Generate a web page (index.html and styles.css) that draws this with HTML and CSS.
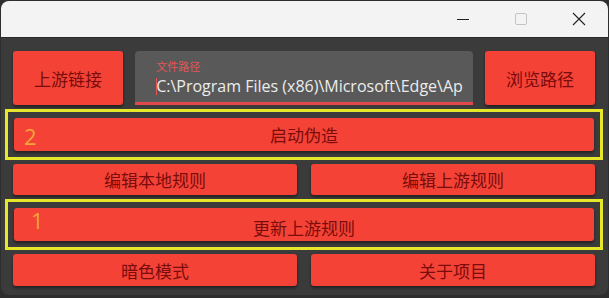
FILE: index.html
```html
<!DOCTYPE html>
<html lang="zh-CN">
<head>
    <meta charset="UTF-8">
    <title>伪造工具</title>
    <link rel="stylesheet" href="styles.css">
</head>
<body>
<div class="window">
    <div class="titlebar">
        <div class="control">
            <svg width="14" height="14" viewBox="0 0 14 14"><line x1="1" y1="7.5" x2="13" y2="7.5" stroke="#222" stroke-width="1"/></svg>
        </div>
        <div class="control">
            <svg width="14" height="14" viewBox="0 0 14 14"><rect x="1.5" y="1.5" width="11" height="11" rx="1.5" fill="none" stroke="#c4c4c4" stroke-width="1"/></svg>
        </div>
        <div class="control">
            <svg width="14" height="14" viewBox="0 0 14 14"><path d="M1 1 L13 13 M13 1 L1 13" stroke="#222" stroke-width="1.1"/></svg>
        </div>
    </div>

    <div class="content">
        <div class="row-top">
            <button class="btn">上游链接</button>
            <div class="field">
                <span class="field-label">文件路径</span>
                <span class="field-value"><span class="caret"></span>C:\Program Files (x86)\Microsoft\Edge\Ap</span>
            </div>
            <button class="btn">浏览路径</button>
        </div>

        <div class="marked">
            <button class="btn wide">启动伪造</button>
            <span class="step step-2">2</span>
        </div>

        <div class="row-pair">
            <button class="btn">编辑本地规则</button>
            <button class="btn">编辑上游规则</button>
        </div>

        <div class="marked">
            <button class="btn wide low">更新上游规则</button>
            <span class="step step-1">1</span>
        </div>

        <div class="row-pair">
            <button class="btn">暗色模式</button>
            <button class="btn">关于项目</button>
        </div>
    </div>
</div>
</body>
</html>
```

FILE: styles.css
```css
html, body {
    margin: 0;
    padding: 0;
    background-color: #2e2e2e;
}

body {
    font-family: "Noto Sans CJK SC", "Noto Sans", sans-serif;
    width: 609px;
    height: 298px;
    overflow: hidden;
}

.window {
    width: 607px;
    height: 294px;
    margin: 1px 1px 0 1px;
    background-color: #3b3b3b;
    border-radius: 8px;
    overflow: hidden;
}

.titlebar {
    height: 36px;
    background-color: #f3f3f3;
    display: flex;
    justify-content: flex-end;
    border-bottom: 1px solid #2a2a2a;
}

.control {
    width: 58px;
    display: flex;
    align-items: center;
    justify-content: center;
}

.control svg {
    display: block;
}

.content {
    padding: 13px 13px 0 12px;
    display: flex;
    flex-direction: column;
    gap: 13px;
}

.btn {
    background-color: #f44336;
    color: #7a0c0c;
    border: none;
    border-radius: 3px;
    box-shadow: 0 2px 3px rgba(0, 0, 0, 0.45);
    font-family: "Noto Sans CJK SC", sans-serif;
    font-size: 17px;
    padding: 0;
    cursor: pointer;
}

.row-top {
    display: flex;
    gap: 12px;
    height: 54px;
}

.row-top .btn {
    width: 111px;
}

.field {
    flex-grow: 1;
    background-color: #595959;
    border-radius: 4px 4px 0 0;
    border-bottom: 3px solid #e0484a;
    padding: 9px 10px 0 21px;
    display: flex;
    flex-direction: column;
    gap: 3px;
    box-sizing: border-box;
}

.field-label {
    font-size: 11px;
    line-height: 12px;
    color: #e65656;
}

.field-value {
    font-family: "Open Sans", sans-serif;
    font-size: 16px;
    line-height: 22px;
    color: #ececec;
    white-space: nowrap;
    overflow: hidden;
    position: relative;
}

.caret {
    position: absolute;
    left: 0;
    top: 3px;
    width: 1px;
    height: 17px;
    background-color: #e65656;
}

.marked {
    position: relative;
    height: 33px;
    display: flex;
    outline: 3px solid #e6e62a;
    outline-offset: 6px;
    margin: 0 1px;
}

.wide {
    flex-grow: 1;
}

.low {
    padding-top: 5px;
}

.step {
    position: absolute;
    color: #f2a33a;
    font-family: "Open Sans", sans-serif;
    font-size: 22px;
    line-height: 22px;
}

.step-2 {
    left: 10px;
    top: 7px;
}

.step-1 {
    left: 17px;
    top: 1px;
}

.row-pair {
    display: grid;
    grid-template-columns: 1fr 1fr;
    gap: 14px;
    height: 31px;
}

.row-pair:last-child {
    height: 32px;
}
```
